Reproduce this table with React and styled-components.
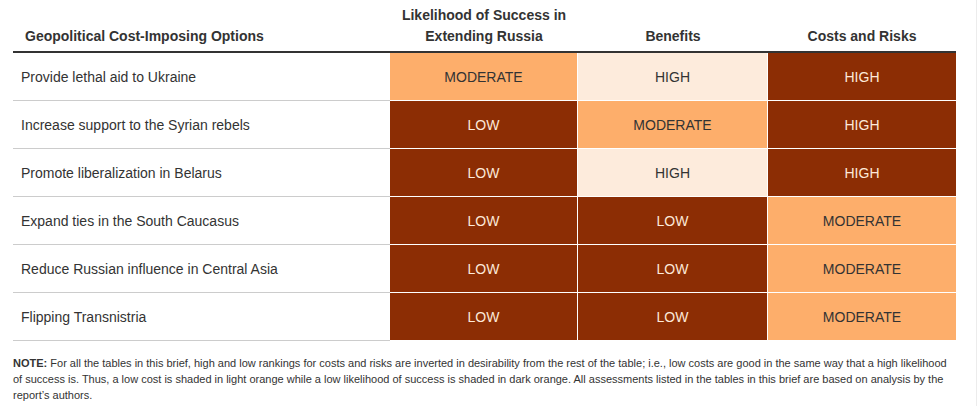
import styled, { createGlobalStyle } from "styled-components";

const rows = [
  ["Provide lethal aid to Ukraine", "MODERATE", "HIGH", "HIGH"],
  ["Increase support to the Syrian rebels", "LOW", "MODERATE", "HIGH"],
  ["Promote liberalization in Belarus", "LOW", "HIGH", "HIGH"],
  ["Expand ties in the South Caucasus", "LOW", "LOW", "MODERATE"],
  ["Reduce Russian influence in Central Asia", "LOW", "LOW", "MODERATE"],
  ["Flipping Transnistria", "LOW", "LOW", "MODERATE"],
];

const colWidths = [377, 188, 190, 188];

// shade per column: likelihood & benefits high = good, costs inverted
const shadeFor = (col, value) => {
  if (value === "MODERATE") return "mid";
  if (col === 3) return value === "HIGH" ? "dark" : "light";
  return value === "HIGH" ? "light" : "dark";
};

function App() {
  return (
    <Page>
      <GlobalStyle />
      <Table>
        <colgroup>
          {colWidths.map((w, i) => (
            <Col key={i} $width={w} />
          ))}
        </colgroup>
        <thead>
          <tr>
            <HeadCell $align="left">Geopolitical Cost-Imposing Options</HeadCell>
            <HeadCell>
              Likelihood of Success in
              <br />
              Extending Russia
            </HeadCell>
            <HeadCell>Benefits</HeadCell>
            <HeadCell>Costs and Risks</HeadCell>
          </tr>
        </thead>
        <tbody>
          {rows.map((row) => (
            <tr key={row[0]}>
              <OptionCell>{row[0]}</OptionCell>
              {row.slice(1).map((value, i) => (
                <RatingCell key={i} $shade={shadeFor(i + 1, value)} $last={i === 2}>
                  {value}
                </RatingCell>
              ))}
            </tr>
          ))}
        </tbody>
      </Table>
      <Note>
        <strong>NOTE:</strong> For all the tables in this brief, high and low rankings for costs and risks are
        inverted in desirability from the rest of the table; i.e., low costs are good in the same way that a high
        likelihood of success is. Thus, a low cost is shaded in light orange while a low likelihood of success is
        shaded in dark orange. All assessments listed in the tables in this brief are based on analysis by the
        report’s authors.
      </Note>
    </Page>
  );
}

const GlobalStyle = createGlobalStyle`
  body {
    margin: 0;
    background: #fff;
    font-family: "Liberation Sans", Arial, sans-serif;
    color: #333;
  }
`;

const Page = styled.div`
  width: 963px;
  min-height: 406px;
  padding-left: 13px;
  border-right: 1px solid #ececec;
  box-sizing: content-box;
`;

const Table = styled.table`
  width: 943px;
  border-collapse: separate;
  border-spacing: 0;
  table-layout: fixed;
`;

const Col = styled.col`
  width: ${(p) => p.$width}px;
`;

const HeadCell = styled.th`
  padding: ${(p) => (p.$align === "left" ? "5px 12px 4px" : "5px 2px 4px")};
  font-size: 14px;
  line-height: 21px;
  font-weight: bold;
  color: #333;
  white-space: nowrap;
  text-align: ${(p) => p.$align || "center"};
  vertical-align: bottom;
  border-bottom: 2px solid #333;
`;

const OptionCell = styled.td`
  height: 48px;
  box-sizing: border-box;
  padding: 0 8px;
  font-size: 14px;
  color: #333;
  border-bottom: 1px solid #ccc;
`;

const shades = {
  dark: { bg: "#8c2d04", fg: "#fde9d9" },
  mid: { bg: "#fdae6b", fg: "#333" },
  light: { bg: "#fdebdc", fg: "#333" },
};

const RatingCell = styled.td`
  height: 48px;
  box-sizing: border-box;
  padding: 0;
  text-align: center;
  font-size: 14px;
  background: ${(p) => shades[p.$shade].bg};
  color: ${(p) => shades[p.$shade].fg};
  border-bottom: 1px solid #fff;
  border-right: ${(p) => (p.$last ? "none" : "1px solid #fff")};
`;

const Note = styled.p`
  margin: 14px 0 0;
  width: 943px;
  font-size: 11px;
  line-height: 16px;
  color: #333;

  strong {
    font-weight: bold;
  }
`;

export default App;
